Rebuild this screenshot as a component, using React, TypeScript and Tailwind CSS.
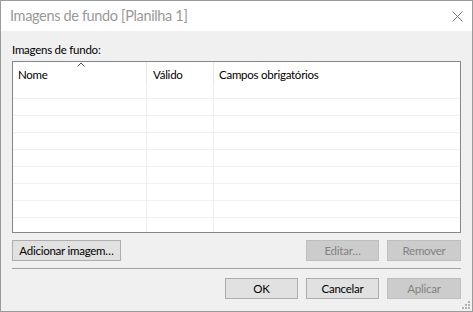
import React from "react";

const rows = Array.from({ length: 9 });

function Btn({ label, disabled, w }: { label: string; disabled?: boolean; w: string }) {
  return (
    <div
      className={`${w} flex h-[21px] items-center justify-center border text-[11.5px] tracking-[-0.25px] ${
        disabled
          ? "border-[#bfbfbf] bg-[#cccccc] text-[#838383]"
          : "border-[#adadad] bg-[#e1e1e1] text-black"
      }`}
    >
      {label}
    </div>
  );
}

export default function App() {
  return (
    <div
      className="flex h-[312px] w-[473px] flex-col border border-[#9b9b9b] bg-white"
      style={{ fontFamily: "Lato, 'Liberation Sans', sans-serif" }}
    >
      {/* title bar */}
      <div className="flex h-[30px] items-center justify-between bg-white pl-[9px] pr-[9px]">
        <span className="text-[14.5px] tracking-[-0.35px] text-[#999999]">Imagens de fundo [Planilha 1]</span>
        <svg width="11" height="11" viewBox="0 0 11 11" className="mt-[1px]">
          <path d="M0.5 0.5 L10.5 10.5 M10.5 0.5 L0.5 10.5" stroke="#7a7a7a" strokeWidth="1" />
        </svg>
      </div>

      {/* body */}
      <div className="relative flex flex-1 flex-col bg-[#f0f0f0] px-[11px] pt-[11px] text-[11.5px] tracking-[-0.25px]">
        <div className="h-[16px] leading-[16px] text-black">Imagens de fundo:</div>

        {/* list view */}
        <div className="mt-[3px] flex h-[172px] flex-col overflow-hidden border border-[#828790] bg-white text-black">
          <div className="relative flex h-[20px] shrink-0">
            <div className="w-[134px] border-r border-[#e5e5e5] pl-[5px] pt-[4px]">Nome</div>
            <div className="w-[67px] border-r border-[#e5e5e5] pl-[6px] pt-[4px]">Válido</div>
            <div className="flex-1 pl-[5px] pt-[4px]">Campos obrigatórios</div>
            <svg width="8" height="5" viewBox="0 0 8 5" className="absolute left-[64px] top-0">
              <path d="M0.5 4.5 L4 1 L7.5 4.5" stroke="#555" fill="none" strokeWidth="1" />
            </svg>
          </div>
          {rows.map((_, i) => (
            <div key={i} className="flex h-[17px] shrink-0 border-b border-[#f0f0f0]">
              <div className="w-[134px] border-r border-[#f0f0f0]" />
              <div className="w-[67px] border-r border-[#f0f0f0]" />
              <div className="flex-1" />
            </div>
          ))}
        </div>

        <div className="mt-[7px] flex items-center">
          <Btn label="Adicionar imagem…" w="w-[109px]" />
          <div className="flex-1" />
          <Btn label="Editar…" disabled w="w-[73px]" />
          <div className="w-[8px]" />
          <Btn label="Remover" disabled w="w-[74px]" />
        </div>

        <div className="mt-[7px] h-px bg-[#a0a0a0]" />

        <div className="mt-[9px] flex items-center justify-end gap-[8px]">
          <Btn label="OK" w="w-[73px]" />
          <Btn label="Cancelar" w="w-[73px]" />
          <Btn label="Aplicar" disabled w="w-[74px]" />
        </div>

        {/* size grip */}
        <svg width="10" height="10" viewBox="0 0 10 10" className="absolute bottom-[1px] right-[1px]">
          <g fill="#b4b4b4">
            <rect x="7" y="1" width="2" height="2" />
            <rect x="4" y="4" width="2" height="2" />
            <rect x="7" y="4" width="2" height="2" />
            <rect x="1" y="7" width="2" height="2" />
            <rect x="4" y="7" width="2" height="2" />
            <rect x="7" y="7" width="2" height="2" />
          </g>
        </svg>
      </div>
    </div>
  );
}
